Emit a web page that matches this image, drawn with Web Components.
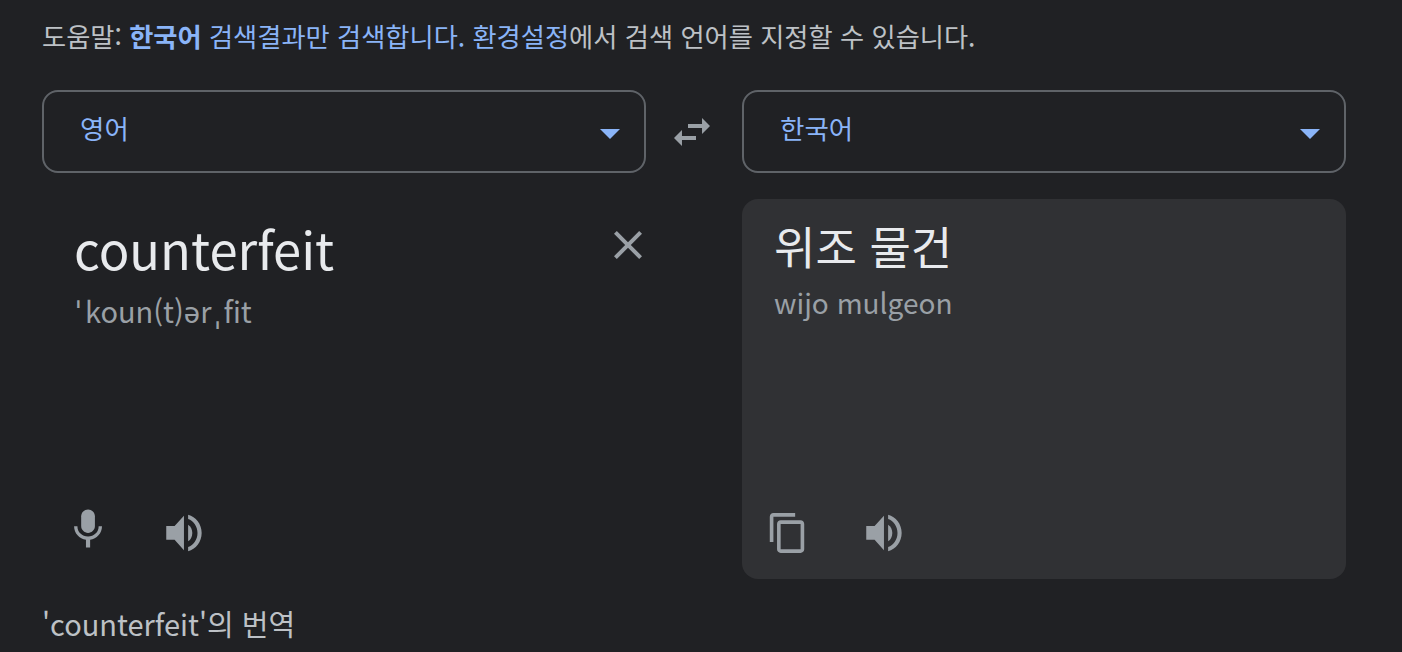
<!DOCTYPE html>
<html lang="ko"><head><meta charset="utf-8"><title>번역</title>
<style>
html,body{margin:0;height:100%;background:#202124;overflow:hidden}
body{font-family:"Noto Sans CJK KR","Noto Sans",sans-serif;color:#bdc1c6}
</style></head><body>
<translate-page>
  <help-line></help-line>
  <lang-select slot="from" label="영어"></lang-select>
  <swap-button slot="swap"></swap-button>
  <lang-select slot="to" label="한국어"></lang-select>
  <source-panel slot="source" text="counterfeit"></source-panel>
  <target-panel slot="target" text="위조 물건" rom="wijo mulgeon"></target-panel>
  <span slot="foot">'counterfeit'의 번역</span>
</translate-page>
<script>
const ICONS={
 mic:'<g transform="translate(.5 -2.2)"><path d="M12 14.2c1.82 0 3.300-1.480 3.300-3.300V6.200c0-1.820-1.480-3.300-3.300-3.300s-3.300 1.480-3.300 3.300v4.700c0 1.820 1.480 3.300 3.300 3.300z"/><path d="M17.100 11c0 2.900-2.300 4.900-5.100 4.900S6.900 13.900 6.900 11H5.300c0 3.400 2.600 6.100 5.700 6.500v3.600h2v-3.600c3.100-.4 5.700-3.100 5.700-6.500h-1.600z"/></g>',
 vol:'<path d="M3 8.700v6.600h4l4.500 5V3.700l-4.500 5H3z"/><path d="M13.500 8v8c1.200-.73 2-2.250 2-4s-.8-3.290-2-4z"/><path d="M13.500 3.230v2.060c2.600.86 4.500 3.540 4.500 6.710s-1.900 5.850-4.500 6.710v2.060c3.700-.91 6.500-4.490 6.500-8.770s-2.800-7.860-6.500-8.770z"/>',
 copy:'<g transform="translate(12 12) scale(.87) translate(-11.5 -12)"><path d="M16 1H4c-1.100 0-2 .9-2 2v14h2V3h12V1z"/><path d="M19 5H8c-1.100 0-2 .9-2 2v14c0 1.100.9 2 2 2h11c1.100 0 2-.9 2-2V7c0-1.100-.9-2-2-2zm0 16H8V7h11v14z"/></g>',
 swap:'<path d="M6.990 11L3 15l3.990 4v-3H14v-2H6.990v-3z"/><path d="M21 9l-3.990-4v3H10v2h7.010v3L21 9z"/>',
 close:'<path d="M19 6.410 17.590 5 12 10.590 6.410 5 5 6.410 10.590 12 5 17.590 6.410 19 12 13.410 17.590 19 19 17.590 13.410 12z"/>'
};
function def(name,css,html){
  customElements.define(name,class extends HTMLElement{
    connectedCallback(){
      if(this.shadowRoot)return;
      const r=this.attachShadow({mode:'open'});
      const a=n=>this.getAttribute(n)||'';
      r.innerHTML='<style>'+css+'</style>'+(typeof html==='function'?html(a):html);
    }
  });
}
def('g-icon',':host{display:block;line-height:0;color:#9aa0a6}svg{display:block;fill:currentColor}',
  a=>`<svg width="${a('size')||50}" height="${a('size')||50}" viewBox="0 0 24 24">${ICONS[a('name')]}</svg>`);
def('translate-page',`
  :host{display:block;padding:0 56px 0 42px;box-sizing:border-box;width:1402px;height:652px}
  .grid{display:grid;grid-template-columns:604px 96px 604px;margin-top:36px}
  .panels{grid-column:1/-1;display:grid;grid-template-columns:604px 96px 604px;margin-top:26px}
  .s{grid-column:1}.t{grid-column:3}
  .foot{margin-top:26px;font-size:29px;line-height:36px;color:#bdc1c6}
`,`<slot></slot>
 <div class="grid"><slot name="from"></slot><slot name="swap"></slot><slot name="to"></slot>
 <div class="panels"><div class="s"><slot name="source"></slot></div><div class="t"><slot name="target"></slot></div></div></div>
 <div class="foot"><slot name="foot"></slot></div>`);
def('help-line',`
  :host{display:block;padding-top:18px;font-size:26.25px;line-height:36px;color:#bdc1c6;white-space:nowrap}
  a{color:#8ab4f8;text-decoration:none}b{font-weight:700}
`,`도움말: <a href="#"><b>한국어</b> 검색결과만 검색합니다.</a> <a href="#">환경설정</a>에서 검색 언어를 지정할 수 있습니다.`);
def('lang-select',`
  :host{display:flex;align-items:center;justify-content:space-between;box-sizing:border-box;height:83px;
    border:2px solid #5f6368;border-radius:16px;padding:0 24px 0 36px;color:#8ab4f8;font-size:26.5px}
  .l{margin-bottom:8px}
  .c{width:0;height:0;margin-top:5px;border-left:10px solid transparent;border-right:10px solid transparent;border-top:10px solid #8ab4f8}
`,a=>`<span class="l">${a('label')}</span><span class="c"></span>`);
def('swap-button',`:host{display:flex;align-items:center;justify-content:center;height:83px;padding-right:4px;box-sizing:border-box}`,
  `<g-icon name="swap" size="48"></g-icon>`);
def('source-panel',`
  :host{display:flex;flex-direction:column;box-sizing:border-box;height:380px;padding:14px 0 0 32px;position:relative}
  .x{position:absolute;right:-6px;top:22px}
  .m{font-size:50.7px;line-height:70px;color:#e8eaed}
  .p{font-size:29px;line-height:44px;color:#9aa0a6;margin-top:5px;white-space:nowrap}
  .a{display:inline-block;width:11px;padding-left:2px;box-sizing:border-box}
  .z{display:inline-block;width:12px;text-align:center}
  .b{margin-top:auto;display:flex;gap:48px;padding:0 0 21px;margin-left:-12px}
`,a=>`<div class="m">${a('text')}</div><div class="p"><span class="a">ˈ</span>koun(t)ər<span class="z">ˌ</span>fit</div>
 <g-icon class="x" name="close" size="48"></g-icon>
 <div class="b"><g-icon name="mic"></g-icon><g-icon name="vol"></g-icon></div>`);
def('target-panel',`
  :host{display:flex;flex-direction:column;box-sizing:border-box;height:380px;padding:12px 0 0 32px;background:#303134;border-radius:16px}
  .m{font-size:45px;line-height:70px;color:#e8eaed}
  .p{font-size:28px;line-height:42px;color:#9aa0a6}
  .b{margin-top:auto;display:flex;gap:48px;padding:0 0 21px;margin-left:-12px}
`,a=>`<div class="m">${a('text')}</div><div class="p">${a('rom')}</div>
 <div class="b"><g-icon name="copy"></g-icon><g-icon name="vol"></g-icon></div>`);
</script>
</body></html>
